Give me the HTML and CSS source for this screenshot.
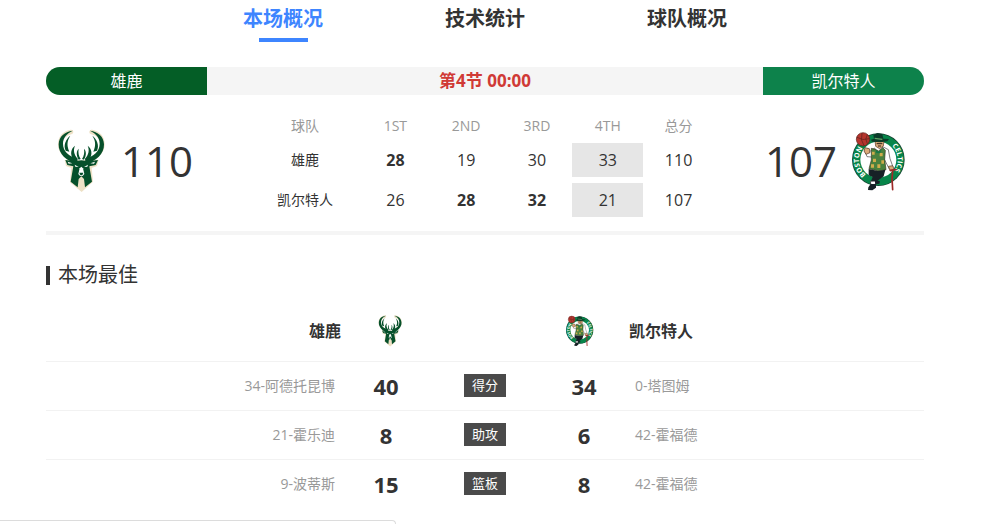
FILE: index.html
```html
<!DOCTYPE html>
<html lang="zh-CN">
<head>
    <meta charset="UTF-8">
    <meta name="viewport" content="width=device-width, initial-scale=1.0">
    <title>雄鹿 vs 凯尔特人</title>
    <link rel="stylesheet" href="styles.css">
</head>
<body>
    <main class="game">
        <nav class="tabs">
            <a href="#" class="tab active">本场概况</a>
            <a href="#" class="tab">技术统计</a>
            <a href="#" class="tab">球队概况</a>
        </nav>

        <div class="status-bar">
            <div class="team-name home">雄鹿</div>
            <div class="game-clock">第4节 00:00</div>
            <div class="team-name away">凯尔特人</div>
        </div>

        <section class="scoreboard">
            <div class="team-score">
                <svg class="logo-bucks" viewBox="50 57 144 192" role="img" aria-label="雄鹿">
                    <g id="bucks">
                        <g fill="none" stroke="#eee1c6" stroke-linecap="round">
                            <path stroke-width="14" d="M104 154C82 143 59 128 60 102C61 82 73 70 92 66"/>
                            <path stroke-width="14" d="M142 154C164 143 187 128 186 102C185 82 173 70 154 66"/>
                        </g>
                        <path fill="#eee1c6" d="M73 150L100 148L123 152L146 148L175 150L170 168L154 174L158 215L124 246L89 217L93 174L77 168Z"/>
                        <g fill="#06502b">
                            <path d="M110 163C79 153 54 132 55 103C56 79 73 65 97 62C78 72 68 83 68 101C68 124 85 139 112 146Z"/>
                            <path d="M136 163C167 153 192 132 191 103C190 79 173 65 149 62C168 72 178 83 178 101C178 124 161 139 134 146Z"/>
                            <path d="M76 122C68 105 77 87 90 77C81 91 78 105 87 125Z"/>
                            <path d="M170 122C178 105 169 87 156 77C165 91 168 105 159 125Z"/>
                            <path d="M99 149C88 131 92 116 104 107C98 121 101 134 112 146Z"/>
                            <path d="M147 149C158 131 154 116 142 107C148 121 145 134 134 146Z"/>
                            <path d="M115 149C107 135 108 123 115 116C113 129 115 137 121 147Z"/>
                            <path d="M131 149C139 135 138 123 131 116C133 129 131 137 125 147Z"/>
                            <path d="M75 150L101 154L123 151L145 154L173 150L166 165L147 169L155 215L134 232L131 207L123 199L115 207L112 232L91 215L99 169L81 165Z"/>
                        </g>
                        <g fill="#fff">
                            <path d="M103 164L115 171L105 170ZM143 164L131 171L141 170ZM82 155L96 160L85 161ZM164 155L150 160L161 161Z"/>
                            <path d="M118 175L123 170L128 175L132 192L127 198L119 198L114 192Z"/>
                        </g>
                        <path fill="#06502b" d="M117 188L129 188L126 196L120 196Z"/>
                        <path fill="#eee1c6" d="M116 211L123 204L130 211L128 237L123 243L117 236Z"/>
                    </g>
                </svg>
                <span class="total">110</span>
            </div>
            <div class="quarters-wrap">
                <table class="quarters">
                    <thead>
                        <tr>
                            <th class="team">球队</th>
                            <th>1ST</th>
                            <th>2ND</th>
                            <th>3RD</th>
                            <th>4TH</th>
                            <th>总分</th>
                        </tr>
                    </thead>
                    <tbody>
                        <tr>
                            <td class="team">雄鹿</td>
                            <td class="win">28</td>
                            <td>19</td>
                            <td>30</td>
                            <td class="current">33</td>
                            <td>110</td>
                        </tr>
                        <tr>
                            <td class="team">凯尔特人</td>
                            <td>26</td>
                            <td class="win">28</td>
                            <td class="win">32</td>
                            <td class="current">21</td>
                            <td>107</td>
                        </tr>
                    </tbody>
                </table>
            </div>
            <div class="team-score right">
                <span class="total">107</span>
                <svg class="logo-celtics" viewBox="300 60 168 183" role="img" aria-label="凯尔特人">
                    <g id="celtics">
                        <circle cx="385" cy="146" r="79" fill="#173f30"/>
                        <circle cx="385" cy="146" r="77" fill="#07854a"/>
                        <circle cx="385" cy="146" r="54" fill="#fff"/>
                        <path id="arc-left" fill="none" d="M385 204A58 58 0 0 1 385 88"/>
                        <path id="arc-right" fill="none" d="M385 88A58 58 0 0 1 385 204"/>
                        <g class="ring-text">
                            <text><textPath href="#arc-left" startOffset="46%">BOSTON</textPath></text>
                            <text><textPath href="#arc-right" startOffset="47%">CELTICS</textPath></text>
                        </g>
                        <!-- 篮球 -->
                        <circle cx="339" cy="85" r="20" fill="#b5342d" stroke="#58221d" stroke-width="2"/>
                        <path fill="none" stroke="#58221d" stroke-width="2" d="M321 79Q338 90 358 83M336 66Q330 88 342 104M352 71Q343 84 352 98"/>
                        <!-- 手臂 -->
                        <path fill="#fff" stroke="#444" stroke-width="2" d="M374 111L357 123L354 112L343 117L351 137L365 138L380 125Z"/>
                        <path fill="#dba978" stroke="#513622" stroke-width="2" d="M345 110L358 113L360 125L348 130L342 120Z"/>
                        <path fill="#fff" stroke="#444" stroke-width="2" d="M398 107L415 116L420 143L429 168L418 174L401 141Z"/>
                        <!-- 头和帽子 -->
                        <path fill="#dba978" stroke="#513622" stroke-width="2" d="M375 89L402 89L400 105L389 113L377 106Z"/>
                        <path fill="#0b3c29" d="M370 72L382 66L397 69L400 83L417 84L412 91L392 94L366 92L363 86L372 83Z"/>
                        <path stroke="#63a366" stroke-width="4" d="M374 82L397 85"/>
                        <path stroke="#302119" stroke-width="3" d="M380 98H397M384 105H393"/>
                        <!-- 背心 -->
                        <path fill="#49813e" stroke="#393821" stroke-width="2" d="M364 112L376 115L386 120L398 110L406 118L404 145L408 176L386 180L357 173L364 147Z"/>
                        <path fill="#d0ac4c" d="M366 122H374V131H366ZM389 126H398V136H389ZM369 143H378V153H369ZM394 148H402V158H394ZM363 160H372V170H363ZM382 160H391V171H382Z"/>
                        <path fill="#167847" d="M377 116L386 122L395 115L390 127L379 126Z"/>
                        <!-- 腿和鞋 -->
                        <path fill="#172126" d="M356 174L384 180L406 176L401 196L383 209L378 222L360 218L368 198L356 193Z"/>
                        <path fill="#fff" stroke="#333" stroke-width="2" d="M361 211L379 210L377 220L363 221Z"/>
                        <path fill="#172126" d="M362 219L378 219L378 230L367 238L354 237L355 229ZM374 208L390 211L388 218L376 220Z"/>
                        <!-- 手杖 -->
                        <path fill="#dba978" stroke="#513622" stroke-width="2" d="M415 166L428 164L432 174L421 180Z"/>
                        <path fill="none" stroke="#9d2927" stroke-width="5" stroke-linecap="round" d="M421 178L438 176M428 179L426 202L428 236"/>
                    </g>
                </svg>
            </div>
        </section>

        <section class="best">
            <h2 class="section-title">本场最佳</h2>
            <table class="leaders">
                <thead>
                    <tr>
                        <th class="name-left">雄鹿</th>
                        <th class="value logo-left"><svg class="logo-bucks small" viewBox="50 57 144 192" role="img" aria-label="雄鹿"><use href="#bucks"/></svg></th>
                        <td class="kind"></td>
                        <th class="value logo-right"><svg class="logo-celtics small" viewBox="300 60 168 183" role="img" aria-label="凯尔特人"><use href="#celtics"/></svg></th>
                        <th class="name-right">凯尔特人</th>
                    </tr>
                </thead>
                <tbody>
                    <tr>
                        <td class="name-left">34-阿德托昆博</td>
                        <td class="value">40</td>
                        <td class="kind"><span class="badge">得分</span></td>
                        <td class="value">34</td>
                        <td class="name-right">0-塔图姆</td>
                    </tr>
                    <tr>
                        <td class="name-left">21-霍乐迪</td>
                        <td class="value">8</td>
                        <td class="kind"><span class="badge">助攻</span></td>
                        <td class="value">6</td>
                        <td class="name-right">42-霍福德</td>
                    </tr>
                    <tr>
                        <td class="name-left">9-波蒂斯</td>
                        <td class="value">15</td>
                        <td class="kind"><span class="badge">篮板</span></td>
                        <td class="value">8</td>
                        <td class="name-right">42-霍福德</td>
                    </tr>
                </tbody>
            </table>
        </section>
    </main>

    <div class="link-status"></div>
</body>
</html>
```
FILE: styles.css
```css
* {
    box-sizing: border-box;
}
body {
    margin: 0;
    background-color: #fff;
    color: #333;
    font-family: "Open Sans", "Noto Sans CJK SC", sans-serif;
    font-size: 14px;
    line-height: 20px;
}
.ring-text {
    fill: #fff;
    font-family: "Open Sans", sans-serif;
    font-size: 21px;
    font-weight: bold;
    text-anchor: middle;
}
.game {
    padding: 0 76px 0 46px;
}

/* 标签页 */
.tabs {
    display: flex;
    justify-content: center;
    margin-bottom: 25px;
}
.tab {
    display: flex;
    flex-direction: column;
    align-items: center;
    width: 23%;
    color: #333;
    font-size: 20px;
    font-weight: bold;
    line-height: 38px;
    text-decoration: none;
}
.tab::after {
    content: "";
    width: 49px;
    height: 4px;
}
.tab.active {
    color: #3e85ff;
}
.tab.active::after {
    background-color: #3e85ff;
}

/* 比赛状态 */
.status-bar {
    display: flex;
    overflow: hidden;
    border-radius: 14px;
    background-color: #f5f5f5;
    font-size: 16px;
    line-height: 28px;
    text-align: center;
}
.team-name {
    width: 161px;
    color: #fff;
}
.team-name.home {
    background-color: #045e26;
}
.team-name.away {
    background-color: #0d824b;
}
.game-clock {
    flex: 1;
    color: #d03a36;
    font-size: 17px;
    font-weight: bold;
}

/* 比分 */
.scoreboard {
    display: flex;
    align-items: center;
    justify-content: space-between;
    padding: 14px 0 8px;
    border-bottom: 4px solid #f5f5f5;
}
.team-score {
    display: flex;
    align-items: center;
    gap: 16px;
    width: 161px;
    padding-left: 11px;
    margin-bottom: 10px;
}
.team-score.right {
    justify-content: flex-end;
    gap: 13px;
    padding: 0 18px 0 0;
}
.total {
    font-size: 42px;
    line-height: 60px;
}
.logo-bucks {
    flex: none;
    width: 48px;
    height: 64px;
}
.logo-celtics {
    flex: none;
    width: 56px;
    height: 61px;
}
.quarters-wrap {
    padding-right: 6px;
}
.quarters {
    width: 464px;
    table-layout: fixed;
    border-spacing: 0 6px;
    text-align: center;
}
.quarters th,
.quarters td {
    padding: 0;
}
.quarters th {
    color: #999;
    font-weight: normal;
    line-height: 22px;
}
.quarters td {
    height: 34px;
    font-size: 16px;
}
.quarters .team {
    width: 110px;
    font-size: 14px;
}
.quarters .win {
    font-weight: bold;
}
.quarters .current {
    background-color: #e6e6e6;
}

/* 本场最佳 */
.section-title {
    display: flex;
    align-items: center;
    gap: 8px;
    margin: 24px 0 10px;
    font-size: 20px;
    font-weight: normal;
    line-height: 32px;
}
.section-title::before {
    content: "";
    width: 4px;
    height: 19px;
    background-color: #333;
}
.leaders {
    width: 100%;
    table-layout: fixed;
    border-collapse: collapse;
}
.leaders th,
.leaders td {
    padding: 0;
}
.leaders th {
    height: 60px;
    font-size: 16px;
}
.leaders tbody tr {
    height: 49px;
    border-top: 1px solid #f2f2f2;
}
.leaders td {
    color: #999;
}
.leaders .name-left {
    text-align: right;
}
.leaders td.name-left {
    padding-right: 6px;
}
.leaders .name-right {
    text-align: left;
}
.leaders td.name-right {
    padding-left: 6px;
}
.leaders .value {
    width: 90px;
    color: #333;
    font-size: 22px;
    font-weight: bold;
    text-align: center;
}
.leaders .logo-left {
    padding-left: 8px;
}
.leaders .logo-right {
    padding-right: 10px;
}
.leaders .kind {
    width: 108px;
    text-align: center;
}
.badge {
    display: inline-block;
    padding: 0 8px;
    background-color: #4a4a4a;
    color: #fff;
    font-size: 13px;
    line-height: 23px;
}
.small {
    vertical-align: middle;
}
.logo-bucks.small {
    width: 24px;
    height: 32px;
}
.logo-celtics.small {
    width: 29px;
    height: 32px;
}

/* 左下角链接提示框 */
.link-status {
    position: fixed;
    bottom: 0;
    left: 0;
    width: 396px;
    height: 4px;
    border-top: 1px solid #dcdcdc;
    border-right: 1px solid #dcdcdc;
    border-top-right-radius: 4px;
    background-color: #fff;
}
```
